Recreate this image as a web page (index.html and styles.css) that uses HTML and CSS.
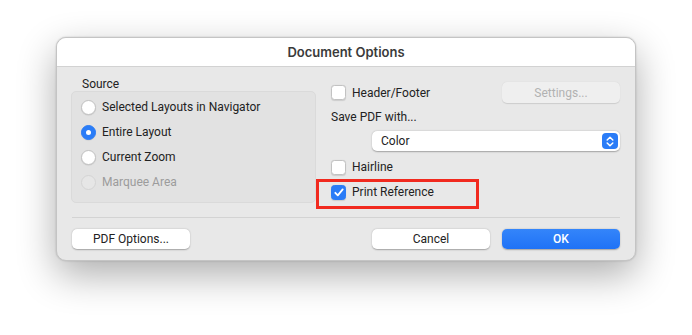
FILE: index.html
```html
<!DOCTYPE html>
<html lang="en">
  <head>
    <meta charset="UTF-8" />
    <title>Document Options</title>
    <link rel="stylesheet" href="styles.css">
  </head>
  <body>
    <div class="window">
      <div class="titlebar">Document Options</div>

      <div class="content">
        <div class="columns">
          <div class="source">
            <div class="group-label">Source</div>
            <div class="group-box">
              <label class="radio"><span class="dot"></span>Selected Layouts in Navigator</label>
              <label class="radio"><span class="dot on"></span>Entire Layout</label>
              <label class="radio"><span class="dot"></span>Current Zoom</label>
              <label class="radio disabled"><span class="dot"></span>Marquee Area</label>
            </div>
          </div>

          <div class="options">
            <div class="row header-row">
              <label class="check"><span class="box"></span>Header/Footer</label>
              <button class="btn small disabled">Settings...</button>
            </div>
            <div class="save-label">Save PDF with...</div>
            <div class="popup">
              <span>Color</span>
              <span class="stepper">
                <svg width="8" height="11" viewBox="0 0 8 11">
                  <path d="M1.2 4 L4 1.3 L6.8 4 M1.2 7 L4 9.7 L6.8 7" fill="none" stroke="#fff" stroke-width="1.5" stroke-linecap="round" stroke-linejoin="round"/>
                </svg>
              </span>
            </div>
            <label class="check hairline"><span class="box"></span>Hairline</label>
            <div class="highlighted">
              <label class="check"><span class="box on">
                <svg width="10" height="9" viewBox="0 0 10 9">
                  <path d="M1.3 4.8 L3.8 7.4 L8.7 1.4" fill="none" stroke="#fff" stroke-width="1.8" stroke-linecap="round" stroke-linejoin="round"/>
                </svg>
              </span>Print Reference</label>
              <!-- annotation box -->
              <div class="marker"></div>
            </div>
          </div>
        </div>

        <div class="separator"></div>

        <div class="footer">
          <button class="btn">PDF Options...</button>
          <div class="actions">
            <button class="btn">Cancel</button>
            <button class="btn primary">OK</button>
          </div>
        </div>
      </div>
    </div>
  </body>
</html>
```

FILE: styles.css
```css
html, body {
  height: 100%;
}

body {
  margin: 0;
  padding-top: 37px;
  box-sizing: border-box;
  background-color: #ffffff;
  font-family: Roboto, "Liberation Sans", sans-serif;
  font-size: 12px;
  color: #222;
}

.window {
  margin-left: 56px;
  width: 580px;
  height: 224px;
  box-sizing: border-box;
  border-radius: 10px;
  border: 1px solid #c4c4c4;
  background-color: #e8e8e8;
  box-shadow: 0 14px 38px rgba(0, 0, 0, 0.32), 0 0 2px rgba(0, 0, 0, 0.2);
}

.titlebar {
  height: 28px;
  background-color: #ffffff;
  border-bottom: 1px solid #d2d2d2;
  border-radius: 9px 9px 0 0;
  text-align: center;
  line-height: 28px;
  font-family: Inter, "Liberation Sans", sans-serif;
  font-weight: 600;
  font-size: 13px;
  color: #3a3a3a;
}

.content {
  padding: 10px 15px 0 14px;
}

.columns {
  display: grid;
  grid-template-columns: 245px 1fr;
  gap: 15px;
  height: 140px;
}

.group-label {
  margin-left: 11px;
  height: 14px;
  line-height: 14px;
}

.group-box {
  height: 112px;
  box-sizing: border-box;
  border: 1px solid #dadada;
  border-radius: 5px;
  background-color: #e2e2e2;
  padding: 8px 0 0 9px;
  display: flex;
  flex-direction: column;
  gap: 11px;
}

.radio {
  display: flex;
  align-items: center;
  gap: 6px;
  height: 14px;
}

.dot {
  width: 13px;
  height: 13px;
  border-radius: 50%;
  background-color: #fff;
  border: 0.5px solid #c2c2c2;
  box-shadow: 0 0.5px 1px rgba(0, 0, 0, 0.12);
  display: flex;
  align-items: center;
  justify-content: center;
}

.dot.on {
  background-color: #2a7cf7;
  border-color: #2a7cf7;
}

.dot.on::after {
  content: "";
  width: 5px;
  height: 5px;
  border-radius: 50%;
  background-color: #fff;
}

.radio.disabled {
  color: #9c9c9c;
}

.radio.disabled .dot {
  background-color: #e6e6e6;
  border-color: #d4d4d4;
  box-shadow: none;
}

.options {
  padding-top: 5px;
}

.row {
  display: flex;
  align-items: center;
  justify-content: space-between;
}

.header-row {
  height: 21px;
}

.check {
  display: flex;
  align-items: center;
  gap: 6px;
  height: 14px;
}

.box {
  width: 13px;
  height: 13px;
  border-radius: 3.5px;
  background-color: #fff;
  border: 0.5px solid #c2c2c2;
  box-shadow: 0 0.5px 1px rgba(0, 0, 0, 0.12);
  display: flex;
  align-items: center;
  justify-content: center;
}

.box.on {
  background-color: #2a7cf7;
  border-color: #2a7cf7;
}

.save-label {
  margin-top: 7px;
  height: 14px;
  line-height: 14px;
}

.popup {
  margin: 7px 0 0 41px;
  height: 20px;
  box-sizing: border-box;
  background-color: #fff;
  border-radius: 5px;
  box-shadow: 0 0.5px 1.5px rgba(0, 0, 0, 0.3);
  display: flex;
  align-items: center;
  justify-content: space-between;
  padding: 0 2px 0 9px;
}

.stepper {
  width: 16px;
  height: 16px;
  border-radius: 4px;
  background-color: #2a7cf7;
  display: flex;
  align-items: center;
  justify-content: center;
}

.hairline {
  margin-top: 9px;
}

.highlighted {
  position: relative;
  margin-top: 11px;
}

.marker {
  position: absolute;
  left: -15px;
  top: -6px;
  width: 163px;
  height: 30px;
  box-sizing: border-box;
  border: 3px solid #f12a1f;
}

.separator {
  height: 1px;
  background-color: #d3d3d3;
  margin-left: 1px;
}

.footer {
  display: flex;
  justify-content: space-between;
  padding: 11px 0 0 1px;
}

.actions {
  display: flex;
  gap: 12px;
}

.btn {
  width: 118px;
  height: 20px;
  border: none;
  border-radius: 5px;
  background-color: #fff;
  box-shadow: 0 0.5px 1.5px rgba(0, 0, 0, 0.3);
  font-family: inherit;
  font-size: 12px;
  color: #222;
  padding: 0;
}

.btn.small {
  height: 21px;
}

.btn.disabled {
  background-color: #efefef;
  color: #b2b2b2;
  box-shadow: 0 0.5px 1px rgba(0, 0, 0, 0.12);
}

.btn.primary {
  background: linear-gradient(#3485fa, #1f72f6);
  color: #fff;
  font-weight: 500;
}
```
